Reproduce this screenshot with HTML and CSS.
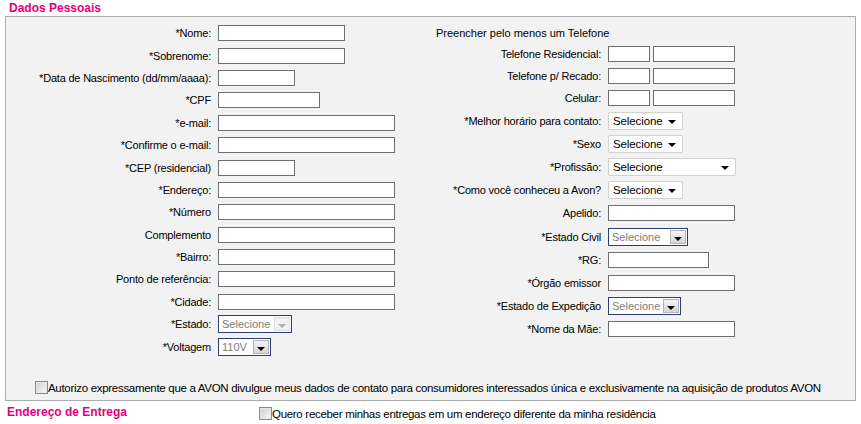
FILE: index.html
```html
<!DOCTYPE html>
<html lang="pt-BR">
<head>
  <meta charset="UTF-8">
  <title>Cadastro</title>
  <link rel="stylesheet" href="styles.css">
</head>
<body>

<h2 class="title">Dados Pessoais</h2>
<div class="panel">
  <div class="cols">
    <div class="col-left">
      <div class="row"><label>*Nome:</label><input class="txt w127" type="text"></div>
      <div class="row"><label>*Sobrenome:</label><input class="txt w127" type="text"></div>
      <div class="row"><label>*Data de Nascimento (dd/mm/aaaa):</label><input class="txt w77" type="text"></div>
      <div class="row"><label>*CPF</label><input class="txt w102" type="text"></div>
      <div class="row"><label>*e-mail:</label><input class="txt w177" type="text"></div>
      <div class="row"><label>*Confirme o e-mail:</label><input class="txt w177" type="text"></div>
      <div class="row"><label>*CEP (residencial)</label><input class="txt w77" type="text"></div>
      <div class="row"><label>*Endereço:</label><input class="txt w177" type="text"></div>
      <div class="row"><label>*Número</label><input class="txt w177" type="text"></div>
      <div class="row"><label>Complemento</label><input class="txt w177" type="text"></div>
      <div class="row"><label>*Bairro:</label><input class="txt w177" type="text"></div>
      <div class="row"><label>Ponto de referência:</label><input class="txt w177" type="text"></div>
      <div class="row"><label>*Cidade:</label><input class="txt w177" type="text"></div>
      <div class="row">
        <label>*Estado:</label>
        <div class="combo w74 disabled"><span>Selecione</span><i class="btn"></i></div>
      </div>
      <div class="row">
        <label>*Voltagem</label>
        <div class="combo w53"><span>110V</span><i class="btn"></i></div>
      </div>
    </div>

    <div class="col-right">
      <p class="hint">Preencher pelo menos um Telefone</p>
      <div class="row phone"><label>Telefone Residencial:</label><input class="txt w42" type="text"><input class="txt w82 ddd" type="text"></div>
      <div class="row phone"><label>Telefone p/ Recado:</label><input class="txt w42" type="text"><input class="txt w82 ddd" type="text"></div>
      <div class="row phone"><label>Celular:</label><input class="txt w42" type="text"><input class="txt w82 ddd" type="text"></div>
      <div class="row"><label>*Melhor horário para contato:</label><div class="drop w75"><span>Selecione</span><i class="arr"></i></div></div>
      <div class="row"><label>*Sexo</label><div class="drop w75"><span>Selecione</span><i class="arr"></i></div></div>
      <div class="row"><label>*Profissão:</label><div class="drop w128"><span>Selecione</span><i class="arr"></i></div></div>
      <div class="row"><label>*Como você conheceu a Avon?</label><div class="drop w75"><span>Selecione</span><i class="arr"></i></div></div>
      <div class="row"><label>Apelido:</label><input class="txt w127" type="text"></div>
      <div class="row">
        <label>*Estado Civil</label>
        <div class="combo w80"><span>Selecione</span><i class="btn"></i></div>
      </div>
      <div class="row"><label>*RG:</label><input class="txt w101" type="text"></div>
      <div class="row"><label>*Órgão emissor</label><input class="txt w127" type="text"></div>
      <div class="row">
        <label>*Estado de Expedição</label>
        <div class="combo w73"><span>Selecione</span><i class="btn"></i></div>
      </div>
      <div class="row"><label>*Nome da Mãe:</label><input class="txt w127" type="text"></div>
    </div>
  </div>

  <label class="check authorize"><input type="checkbox">Autorizo expressamente que a AVON divulgue meus dados de contato para consumidores interessados única e exclusivamente na aquisição de produtos AVON</label>
</div>

<div class="delivery">
  <h2 class="title">Endereço de Entrega</h2>
  <label class="check"><input type="checkbox">Quero receber minhas entregas em um endereço diferente da minha residência</label>
</div>

</body>
</html>
```

FILE: styles.css
```css
* {
  margin: 0;
  padding: 0;
  box-sizing: border-box;
}

body {
  font-family: "Liberation Sans", Arial, sans-serif;
  font-size: 11px;
  color: #000;
  background-color: #fff;
}

.title {
  font-size: 12px;
  font-weight: bold;
  color: #e4007c;
  line-height: 16px;
  padding-left: 9px;
}

/*caixa cinza dos dados pessoais*/
.panel {
  width: 851px;
  height: 385px;
  margin-left: 5px;
  padding-top: 5px;
  border: 1px solid #acacac;
  background-color: #f2f2f2;
  display: flex;
  flex-direction: column;
}

.cols {
  display: flex;
}

.col-left {
  width: 424px;
}

.col-left .row {
  height: 22.4px;
}

.col-left label {
  width: 205px;
}

.col-right {
  padding-top: 5px;
}

.col-right .row {
  height: 23.2px;
}

.col-right .row.phone {
  height: 22px;
}

.col-right label {
  width: 171px;
}

.hint {
  height: 16px;
  line-height: 13px;
  padding-left: 6px;
}

.row {
  display: flex;
  align-items: center;
}

.row label {
  text-align: right;
  margin-right: 7px;
  white-space: nowrap;
  letter-spacing: -0.2px;
}

/*campos de texto*/
.txt {
  height: 16px;
  border: 1px solid #6f6f6f;
  background-color: #fff;
  font: inherit;
}

.ddd {
  margin-left: 3px;
}

.w42 { width: 42px; }
.w53 { width: 53px; }
.w73 { width: 73px; }
.w74 { width: 74px; }
.w75 { width: 75px; }
.w77 { width: 77px; }
.w80 { width: 80px; }
.w82 { width: 82px; }
.w101 { width: 101px; }
.w102 { width: 102px; }
.w127 { width: 127px; }
.w128 { width: 128px; }
.w177 { width: 177px; }

/*select com borda azul*/
.combo {
  height: 18px;
  border: 1px solid #2c3f72;
  background-color: #fff;
  display: flex;
  align-items: center;
  padding: 1px;
}

.combo span {
  flex: 1;
  color: #7d7d7d;
  font-size: 11px;
  padding-left: 2px;
  line-height: 14px;
  white-space: nowrap;
  overflow: hidden;
}

.combo .btn {
  flex-shrink: 0;
  width: 16px;
  height: 14px;
  border: 1px solid #b4b4b4;
  background: linear-gradient(#f4f4f4, #d6d6d6);
  position: relative;
}

.combo .btn:after {
  content: "";
  position: absolute;
  left: 3px;
  top: 6px;
  border-left: 4px solid transparent;
  border-right: 4px solid transparent;
  border-top: 4px solid #000;
}

.combo.disabled .btn {
  border-color: #dcdcdc;
  background: #f2f2f2;
}

.combo.disabled .btn:after {
  border-top-color: #b0b0b0;
}

/*select claro*/
.drop {
  height: 18px;
  border: 1px solid #d2d2d2;
  border-radius: 1px;
  background-color: #fff;
  display: flex;
  align-items: center;
  padding: 0 6px 0 4px;
}

.drop span {
  flex: 1;
  font-size: 11.5px;
  line-height: 14px;
  letter-spacing: -0.1px;
}

.drop .arr {
  width: 0;
  height: 0;
  margin-top: 2px;
  border-left: 4px solid transparent;
  border-right: 4px solid transparent;
  border-top: 4px solid #000;
}

/*checkbox*/
.check {
  display: flex;
  align-items: flex-end;
  white-space: nowrap;
  font-size: 11.5px;
  line-height: 12px;
  letter-spacing: -0.3px;
}

.check input {
  -webkit-appearance: none;
  appearance: none;
  flex-shrink: 0;
  width: 13px;
  height: 13px;
  border: 1px solid #8a8a8a;
  background: linear-gradient(135deg, #cfcfcf, #f8f8f8);
  box-shadow: inset 0 0 0 1px #e6e6e6;
  margin: 0;
}

.authorize {
  margin-top: auto;
  margin-bottom: 6px;
  padding-left: 29px;
}

.delivery {
  display: flex;
  align-items: flex-end;
  padding-top: 3px;
}

.delivery .title {
  width: 259px;
  padding-left: 7px;
}
```
